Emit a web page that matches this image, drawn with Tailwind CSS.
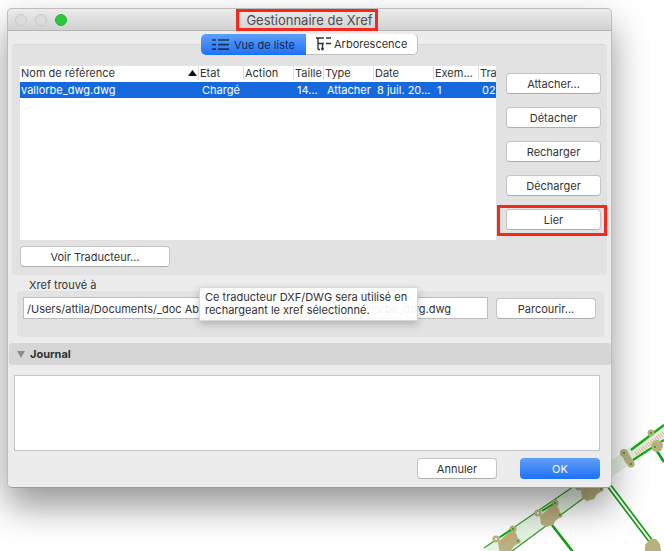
<!DOCTYPE html>
<html><head><meta charset="utf-8"><script src="https://cdn.jsdelivr.net/npm/@tailwindcss/browser@4"></script></head>
<body class="bg-white">
<div class="relative w-[664px] h-[551px] overflow-hidden bg-white font-['Inter','Liberation_Sans',sans-serif] text-[11px] leading-[14px] text-[#333]">
  <svg class="absolute left-0 top-0" width="664" height="551" viewBox="0 0 664 551" fill="none">
    <defs>
      <g id="nd">
        <polygon points="540,516 555,503 559,509 561,517 556,520 553,525 546,527 541,524" fill="#b7b17f"/>
        <circle cx="538" cy="513" r="3.6" fill="#b7b17f"/><circle cx="555" cy="503" r="3.6" fill="#b7b17f"/><circle cx="560" cy="515" r="2.6" fill="#b7b17f"/>
        <path d="M542 511L553 504" stroke="#12a812" stroke-width="2"/>
        <path d="M545 516L555 509" stroke="#dd9a68" stroke-width="2.4" stroke-dasharray="1.2 1"/>
        <circle cx="538" cy="513" r="1" fill="#fff"/><circle cx="555" cy="503" r="1" fill="#18a018"/><circle cx="560" cy="515" r="1" fill="#18a018"/>
      </g>
    </defs>
    <polygon points="484,548 612,460 664,424 664,439 612,477 500,560" fill="#e6f3e4"/>
    <path d="M484 548L612 460M500 560L612 477" stroke="#3aa030" stroke-width="1.3"/>
    <path d="M631 450L664 425M633 460L664 440" stroke="#0fae0f" stroke-width="2.2"/>
    <path d="M636 454L664 433" stroke="#e3b08a" stroke-width="5" stroke-dasharray="1 1.4"/>
    <path d="M607 486L650 543M610 484L653 541" stroke="#169c16" stroke-width="1.7"/>
    <path d="M552 525L573 552" stroke="#169c16" stroke-width="2.6"/>
    <path d="M655 448L664 462" stroke="#169c16" stroke-width="2.6"/>
    <use href="#nd"/>
    <use href="#nd" transform="translate(-42 26)"/>
    <use href="#nd" transform="translate(41 -26)"/>
    <g fill="#b7b17f">
      <polygon points="622,455 627,451 634,462 630,467 625,462"/>
      <circle cx="624" cy="453" r="4"/><circle cx="631" cy="464" r="3.6"/>
      <circle cx="651" cy="433" r="3.4"/><circle cx="657" cy="446" r="6"/>
      <path d="M645 545l5-6 6 0 4 5 1 7h-16z"/>
    </g>
    <g fill="#18a018"><circle cx="624" cy="453" r="1"/><circle cx="631" cy="464" r="1"/><circle cx="651" cy="433" r="1"/><circle cx="655" cy="447" r="1"/></g>
  </svg>

  <div class="absolute left-[7px] top-[8px] w-[605px] h-[480px] rounded-[5px] bg-[#ececec] border border-[#bdbdbd] border-b-[#9c9c9c] shadow-[0_18px_36px_rgba(0,0,0,0.42)] flex flex-col box-border">
    <div class="h-[21px] shrink-0 flex items-start rounded-t-[5px] bg-gradient-to-b from-[#ebebeb] to-[#d2d2d2] border-b border-[#b4b4b4] box-content">
      <div class="w-[228px] h-[21px] shrink-0 flex items-center gap-2 pl-[7px]">
        <span class="w-3 h-3 rounded-full bg-[#dcdcdc] border border-[#c8c8c8]"></span>
        <span class="w-3 h-3 rounded-full bg-[#dcdcdc] border border-[#c8c8c8]"></span>
        <span class="w-3 h-3 rounded-full bg-[#2ec840] border border-[#27b337]"></span>
      </div>
      <div class="w-[142px] h-[22px] shrink-0 border-[3px] border-[#f5281c] flex items-center justify-center pl-[5px] text-[13px] text-[#4c4c4c] box-border">Gestionnaire de Xref</div>
    </div>

    <div class="mt-[13px] ml-[4px] w-[595px] h-[231px] shrink-0 rounded-[4px] bg-[#e2e2e2] border-t border-[#d6d6d6] flex flex-col">
      <div class="-mt-[11px] ml-[189px] flex h-[21px] w-[217px] shrink-0">
        <div class="w-[105px] flex items-center gap-[3px] pl-[11px] rounded-l-[5px] bg-gradient-to-b from-[#5f9ff8] to-[#1c70f6] text-[#10294f]">
          <svg width="18" height="13" viewBox="0 0 18 13" fill="none" stroke="#17345f" stroke-width="1.7"><path d="M0 2h4M6 2h11M0 6.6h4M6 6.6h11M0 11.2h4M6 11.2h11"/></svg>
          <span class="ml-[1px]">Vue de liste</span>
        </div>
        <div class="w-[112px] flex items-center gap-[3px] pl-[10px] bg-white rounded-r-[5px] border-b border-r border-[#bfbfbf]">
          <svg width="15" height="14" viewBox="0 0 15 14" fill="none" stroke="#333" stroke-width="1.4"><path d="M0 1h8M10 1h5M2 1V12.5M2 6.5h6M10 6.5h5M6.5 6.5V12M2 12.5h2"/><circle cx="6.5" cy="12" r="1.4" fill="#333" stroke="none"/></svg>
          <span>Arborescence</span>
        </div>
      </div>
      <div class="flex">
        <div class="ml-[8px] mt-[11px] w-[476px] h-[174px] bg-white overflow-hidden">
          <div class="grid grid-cols-[178px_45px_50px_30px_50px_60px_45px_18px] h-[14px] items-center whitespace-nowrap">
            <div class="relative pl-[1px]">Nom de référence<svg class="absolute right-[1px] top-[4px]" width="9" height="6" viewBox="0 0 9 6"><path d="M4.5 0L9 6H0z" fill="#111"/></svg></div>
            <div class="border-l border-[#dcdcdc] pl-[1px]">Etat</div>
            <div class="border-l border-[#dcdcdc] pl-[1px]">Action</div>
            <div class="border-l border-[#dcdcdc] pl-[1px] overflow-hidden">Taille</div>
            <div class="border-l border-[#dcdcdc] pl-[1px]">Type</div>
            <div class="border-l border-[#dcdcdc] pl-[1px]">Date</div>
            <div class="border-l border-[#dcdcdc] pl-[1px]">Exem...</div>
            <div class="border-l border-[#dcdcdc] pl-[1px] overflow-hidden">Tra</div>
          </div>
          <div class="mt-[2px] grid grid-cols-[178px_45px_50px_30px_50px_60px_45px_18px] h-[16px] items-center whitespace-nowrap bg-[#1569dc] text-white">
            <div class="pl-[1px]">vallorbe_dwg.dwg</div>
            <div class="pl-[4px]">Chargé</div>
            <div></div>
            <div class="pl-[4px]">14...</div>
            <div class="pl-[4px]">Attacher</div>
            <div class="pl-[4px]">8 juil. 20...</div>
            <div class="pl-[4px]">1</div>
            <div class="pl-[4px]">02</div>
          </div>
        </div>
        <div class="ml-[10px] mt-[18px] w-[95px] flex flex-col gap-[13px]">
          <button class="h-[21px] rounded-[4px] bg-white border border-[#c4c4c4] border-b-[#aeaeae]">Attacher...</button>
          <button class="h-[21px] rounded-[4px] bg-white border border-[#c4c4c4] border-b-[#aeaeae]">Détacher</button>
          <button class="h-[21px] rounded-[4px] bg-white border border-[#c4c4c4] border-b-[#aeaeae]">Recharger</button>
          <button class="h-[21px] rounded-[4px] bg-white border border-[#c4c4c4] border-b-[#aeaeae]">Décharger</button>
          <div class="relative h-[21px]">
            <button class="w-full h-[21px] rounded-[4px] bg-white border border-[#c4c4c4] border-b-[#aeaeae]">Lier</button>
            <div class="absolute -left-[9px] -top-[4px] w-[110px] h-[31px] border-[3px] border-[#f5281c]"></div>
          </div>
        </div>
      </div>
      <button class="ml-[8px] mt-[6px] w-[150px] h-[21px] rounded-[4px] bg-white border border-[#c4c4c4] border-b-[#aeaeae]">Voir Traducteur...</button>
    </div>

    <div class="mt-[4px] ml-[21px] h-[12px] leading-[13px] shrink-0">Xref trouvé à</div>
    <div class="relative ml-[9px] w-[587px] h-[46px] shrink-0 rounded-[4px] bg-[#e2e2e2] flex items-start pl-[6px] pt-[6px]">
      <div class="w-[465px] h-[22px] bg-white border border-[#bcbcbc] flex items-center justify-between pl-[3px] pr-[36px] pt-[1px] whitespace-nowrap">
        <span>/Users/attila/Documents/_doc Ab</span><span>vallorbe_dwg.dwg</span>
      </div>
      <button class="ml-[8px] mt-[1px] w-[100px] h-[21px] pt-[1px] rounded-[4px] bg-white border border-[#c4c4c4] border-b-[#aeaeae]">Parcourir...</button>
      <div class="absolute left-[182px] -top-[4px] w-[219px] h-[34px] bg-white/[0.94] border border-[#d8d8d8] shadow-[0_3px_8px_rgba(0,0,0,0.22)] pl-[5px] pt-[3px] leading-[13px]">Ce traducteur DXF/DWG sera utilisé en<br>rechargeant le xref sélectionné.</div>
    </div>

    <div class="mt-[6px] ml-[1px] w-[602px] h-[22px] shrink-0 rounded-[3px] bg-[#d6d6d6] flex items-center pl-[8px] gap-[5px] font-bold">
      <svg width="8" height="7" viewBox="0 0 8 7"><path d="M0 0h8L4 7z" fill="#8c8c8c"/></svg><span>Journal</span>
    </div>
    <div class="mt-[10px] ml-[6px] w-[586px] h-[76px] shrink-0 bg-white border border-[#c6c6c6]"></div>
    <div class="mt-[7px] ml-[409px] flex gap-[23px]">
      <button class="w-[80px] h-[21px] rounded-[4px] bg-white border border-[#c4c4c4] border-b-[#aeaeae]">Annuler</button>
      <button class="w-[80px] h-[21px] rounded-[4px] bg-gradient-to-b from-[#5f9ff8] to-[#1c70f6] text-white">OK</button>
    </div>
  </div>
</div>
</body></html>
